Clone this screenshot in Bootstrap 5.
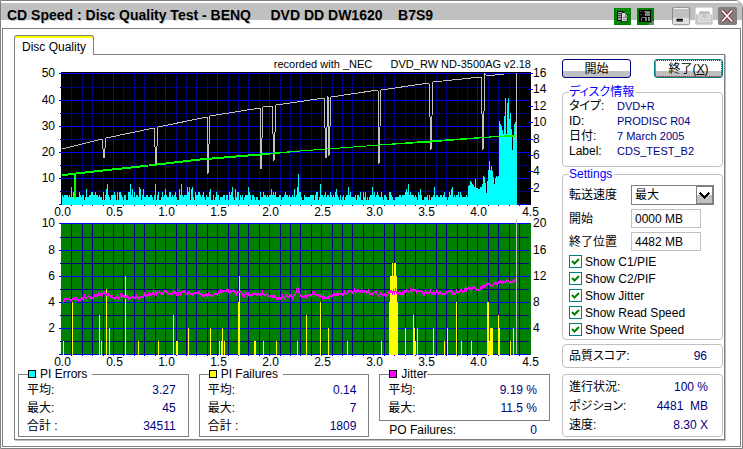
<!DOCTYPE html>
<html lang="ja">
<head>
<meta charset="utf-8">
<meta name="viewport" content="width=device-width, initial-scale=1">
<title>CD Speed : Disc Quality Test</title>
<link href="https://cdn.jsdelivr.net/npm/bootstrap@5.3.0/dist/css/bootstrap.min.css" rel="stylesheet">
<style>
  body { font-family: "Liberation Sans", "Noto Sans CJK JP", sans-serif; font-size: 12px; line-height: 16px; font-feature-settings: "palt"; color: #000; background: #fff; }
  .app-window { border: 1px solid #808080; border-top-right-radius: 8px; min-height: 100vh; }
  .title-bar { height: 27px; padding: 1px 4px 0 6px; background: linear-gradient(#fff 2px, #c0c0c0 2px, #c0c0c0 19px, #fff 19px); border-top-right-radius: 7px; }
  .title-text { font: bold 14px/26px "Liberation Sans", sans-serif; white-space: pre; text-shadow: 1px 1px 0 #c0c0c0; }
  .tool-btn { width: 19px; height: 19px; }
  .win-btn { width: 21px; height: 21px; }
  .win-btn + .win-btn { margin-left: 2px; }
  .frame { margin: 0 1px 1px; border: 1px solid #808080; padding: 6px 15px 5px 11px; }
  .tab-btn { height: 20px; margin-bottom: -1px; padding: 2px 7px 0; border: 1px solid #808080; border-bottom: 0; border-radius: 3px 3px 0 0; background: #fff; box-shadow: inset 0 2px 0 #ff0; position: relative; }
  .panel { border: 1px solid #808080; box-shadow: 1px 1px 0 #c0c0c0; }
  .plot { display: block; width: 100%; height: auto; overflow: visible; }
  .plot text { font-size: 12px; }
  .plot .caption { font-size: 11px; white-space: pre; }
  .stats { padding: 0 6px 0 3px; gap: 10px; grid-template-columns: repeat(3, minmax(0, 1fr)); }
  .stat-box { border: 1px solid #808080; height: 70px; padding: 0 12px 0 8px; }
  .stat-box.short { height: 54px; }
  .stat-box legend { float: none; width: auto; font-size: 12px; line-height: 14px; margin: 0 0 0 1px; padding-right: 5px; }
  .swatch { display: inline-block; width: 8px; height: 8px; border: 1px solid #000; margin-right: 4px; }
  .c-cyan { background: #0ff; } .c-yellow { background: #ff0; } .c-magenta { background: #f0f; }
  .stat-row { line-height: 18px; }
  .po-row { padding: 0 13px 0 10px; }
  .val { color: #000080; }
  .side { width: 168px; padding: 4px 1px 0 6px; }
  .cmd { width: 69px; height: 19px; padding: 0; border: 1px solid #000080; border-radius: 3px; line-height: 16px; background: linear-gradient(#fff 11px, #c0c0c0 11px); }
  .cmd.focused { border-color: #008080; outline: 1px dotted #800000; outline-offset: -2px; }
  .group { border: 1px solid #c0c0c0; border-radius: 4px; padding: 0 6px; }
  .group legend { float: none; width: auto; font-size: 12px; line-height: 14px; margin: 0; padding: 0 2px 0 0; color: #00f; }
  .disc { height: 82px; margin-top: 7px; }
  .disc .key { width: 48px; }
  .disc .val { font-size: 11px; }
  .disc .line { line-height: 15px; }
  .settings { height: 173px; }
  .settings .key { width: 62px; }
  .spin { width: 70px; height: 19px; padding: 0 3px; border: 1px solid #c0c0c0; border-radius: 0; line-height: 17px; }
  .speed { width: 83px; height: 20px; padding: 0 3px; border: 1px solid #808080; border-radius: 0; appearance: none; background: #fff; line-height: 18px; }
  .pick svg { right: 1px; top: 1px; pointer-events: none; }
  .tick { appearance: none; width: 13px; height: 13px; margin: 0 3px 0 0; border: 1px solid #008080; background: #fff; }
  .tick:checked { background: no-repeat center/9px 9px url("data:image/svg+xml,%3Csvg xmlns='http://www.w3.org/2000/svg' viewBox='0 0 9 9'%3E%3Cpath d='M1 4l2.5 2.5L8 2' fill='none' stroke='green' stroke-width='2'/%3E%3C/svg%3E"); }
  .checks { padding-top: 2px; }
  .check-row { height: 17px; }
  .score { margin-top: 4px; height: 24px; line-height: 22px; padding-right: 15px; }
  .progress-box { margin-top: 6px; height: 63px; line-height: 19px; padding: 3px 14px 0 6px; }
</style>
<script src="https://cdn.jsdelivr.net/npm/bootstrap@5.3.0/dist/js/bootstrap.bundle.min.js"></script>
</head>
<body>
<div class="app-window d-flex flex-column">
  <header class="title-bar d-flex align-items-center">
    <span class="title-text flex-grow-1">CD Speed : Disc Quality Test - BENQ     DVD DD DW1620    B7S9</span>
    <button class="tool-btn btn p-0 d-flex me-1" aria-label="Copy">
      <svg width="19" height="19" viewBox="0 0 19 19" shape-rendering="crispEdges"><rect width="19" height="19" rx="2" fill="#008000"/><path d="M2 1.500h15M2 3.500h2M15 4.500h3M15 15.500h3M1 16.500h6M1 14.500h2" stroke="#00c040" stroke-dasharray="1 1"/><path d="M3.500 3.500h6v10h-6z" fill="#a0a0a0" stroke="#000"/><path d="M5 6.500h3M5 8.500h3M5 10.500h3" stroke="#404040"/><path d="M8.500 5.500h4l3 3v7h-7z" fill="#d8d8d8" stroke="#202020"/><path d="M12.500 5v4h3M10 10.500h4M10 12.500h4" fill="none" stroke="#808080"/></svg>
    </button>
    <button class="tool-btn btn p-0 d-flex" aria-label="Save">
      <svg width="19" height="19" viewBox="0 0 19 19" shape-rendering="crispEdges"><rect width="19" height="19" rx="2" fill="#008000"/><path d="M13 18h5v-4" fill="none" stroke="#808080" stroke-width="2"/><rect x="2" y="2" width="14" height="14" fill="#000"/><path d="M8 3h6v6H9V5H8zM4 11h2v4H4zM6 10h5v1H6zM9 11h2v4H9zM12 10h2v5h-2z" fill="#808080"/><path d="M3 3.500h4M4 5.500h3M3 7.500h5" stroke="#505050" stroke-dasharray="1 1"/></svg>
    </button>
    <button class="win-btn btn p-0 d-flex ms-3" aria-label="Minimize">
      <svg width="21" height="21" viewBox="0 0 21 21"><rect x=".5" y=".5" width="19" height="19" rx="2" fill="#c0c0c0" stroke="#808080"/><path d="M2 1.500h16" stroke="#fff"/><path d="M1 12h18v7H1z" fill="#e0e0e0"/><path d="M5 13h7v3H5z"/><path d="M6 15.500h6" stroke="#808080"/></svg>
    </button>
    <button class="win-btn btn p-0 d-flex" aria-label="Maximize">
      <svg width="21" height="21" viewBox="0 0 21 21"><rect x=".5" y=".5" width="19" height="19" rx="2" fill="#c8c8c8" stroke="#d8d8d8"/><path d="M1 1h18v7H1z" fill="#fff"/><path d="M5.500 5.500h10v9h-10z" fill="#c8c8c8" stroke="#fff" stroke-width="3"/><path d="M5.500 5.500h10v9h-10zM5 6.500h11" fill="none" stroke="#a0a0a0"/></svg>
    </button>
    <button class="win-btn btn p-0 d-flex" aria-label="Close">
      <svg width="21" height="21" viewBox="0 0 21 21"><rect width="21" height="20" rx="2" fill="#808080"/><path d="M4.500 4l11 12M15.500 4l-11 12" stroke="#800000" stroke-width="3.500"/><path d="M4.500 4l11 12M15.500 4l-11 12" stroke="#fff" stroke-width="2"/></svg>
    </button>
  </header>

  <main class="frame flex-grow-1">
    <div class="d-flex" role="tablist"><button class="tab-btn" role="tab" aria-selected="true">Disc Quality</button></div>
    <div class="panel d-flex">
      <section class="flex-grow-1">
        <svg class="plot" id="pie" viewBox="15 55 541 163" role="img" aria-label="PI Errors"></svg>
        <svg class="plot" id="pif" viewBox="15 218 541 149" role="img" aria-label="PI Failures"></svg>
        <div class="stats d-grid">
          <fieldset class="stat-box">
            <legend><span class="swatch c-cyan"></span>PI Errors</legend>
            <div class="stat-row d-flex justify-content-between"><span>平均:</span><span class="val">3.27</span></div>
            <div class="stat-row d-flex justify-content-between"><span>最大:</span><span class="val">45</span></div>
            <div class="stat-row d-flex justify-content-between"><span>合計 :</span><span class="val">34511</span></div>
          </fieldset>
          <fieldset class="stat-box">
            <legend><span class="swatch c-yellow"></span>PI Failures</legend>
            <div class="stat-row d-flex justify-content-between"><span>平均:</span><span class="val">0.14</span></div>
            <div class="stat-row d-flex justify-content-between"><span>最大:</span><span class="val">7</span></div>
            <div class="stat-row d-flex justify-content-between"><span>合計 :</span><span class="val">1809</span></div>
          </fieldset>
          <div>
            <fieldset class="stat-box short">
              <legend class="pe-0"><span class="swatch c-magenta"></span>Jitter</legend>
              <div class="stat-row d-flex justify-content-between"><span>平均:</span><span class="val">9.19 %</span></div>
              <div class="stat-row d-flex justify-content-between"><span>最大:</span><span class="val">11.5 %</span></div>
            </fieldset>
            <div class="stat-row po-row d-flex justify-content-between"><span>PO Failures:</span><span class="val">0</span></div>
          </div>
        </div>
      </section>

      <aside class="side flex-shrink-0">
        <div class="d-flex justify-content-between">
          <button class="cmd">開始</button>
          <button class="cmd focused">終了(<u>X</u>)</button>
        </div>
        <fieldset class="group disc">
          <legend>ディスク情報</legend>
          <div class="line d-flex"><span class="key">タイプ:</span><span class="val">DVD+R</span></div>
          <div class="line d-flex"><span class="key">ID:</span><span class="val">PRODISC R04</span></div>
          <div class="line d-flex"><span class="key">日付:</span><span class="val">7 March 2005</span></div>
          <div class="line d-flex"><span class="key">Label:</span><span class="val">CDS_TEST_B2</span></div>
        </fieldset>
        <fieldset class="group settings">
          <legend>Settings</legend>
          <div class="d-flex align-items-center pt-1">
            <label class="key" for="speed">転送速度</label>
            <span class="pick position-relative d-flex">
              <select class="speed" id="speed"><option>最大</option></select>
              <svg class="position-absolute" width="17" height="18" viewBox="0 0 17 18" shape-rendering="crispEdges"><rect x=".5" y=".5" width="16" height="17" fill="#fff" stroke="#808080"/><path d="M1 9h15v8H1z" fill="#c0c0c0"/><path d="M4 7l4.500 4.500L13 7" fill="none" stroke="#000" stroke-width="2"/></svg>
            </span>
          </div>
          <div class="d-flex align-items-center pt-1"><label class="key" for="start">開始</label><input class="spin" id="start" value="0000 MB"></div>
          <div class="d-flex align-items-center pt-1"><label class="key" for="end">終了位置</label><input class="spin" id="end" value="4482 MB"></div>
          <div class="checks">
            <label class="check-row d-flex align-items-center"><input class="tick" type="checkbox" checked>Show C1/PIE</label>
            <label class="check-row d-flex align-items-center"><input class="tick" type="checkbox" checked>Show C2/PIF</label>
            <label class="check-row d-flex align-items-center"><input class="tick" type="checkbox" checked>Show Jitter</label>
            <label class="check-row d-flex align-items-center"><input class="tick" type="checkbox" checked>Show Read Speed</label>
            <label class="check-row d-flex align-items-center"><input class="tick" type="checkbox" checked>Show Write Speed</label>
          </div>
        </fieldset>
        <div class="group score d-flex justify-content-between"><span>品質スコア:</span><span class="val">96</span></div>
        <div class="group progress-box">
          <div class="d-flex justify-content-between"><span>進行状況:</span><span class="val">100 %</span></div>
          <div class="d-flex justify-content-between"><span>ポジション:</span><span class="val">4481&nbsp; MB</span></div>
          <div class="d-flex justify-content-between"><span>速度:</span><span class="val">8.30 X</span></div>
        </div>
      </aside>
    </div>
  </main>
</div>
<script>
  // Small repeatable generator, so the noise looks the same on every load
  let seed = 7;
  const rnd = () => (seed = (seed * 16807) % 2147483647) / 2147483647;
  const gx = g => Math.round(61 + g * 104.1) + .5;
  const path = (d, stroke, w = 1) => `<path d="${d}" fill="none" stroke="${stroke}" stroke-width="${w}" shape-rendering="crispEdges"/>`;
  const label = (x, y, t, a = 'start') => `<text x="${x}" y="${y}" text-anchor="${a}">${t}</text>`;
  const line = pts => 'M' + pts.map(p => p.join(' ')).join('L');
  const lerp = (pts, x) => {
    for (let i = 1; i < pts.length; i++) if (x <= pts[i][0]) {
      const [a, b] = [pts[i - 1], pts[i]];
      return a[1] + (b[1] - a[1]) * (x - a[0]) / (b[0] - a[0]);
    }
    return pts[pts.length - 1][1];
  };

  function grid(top, majors, minors, fill) {
    const bottom = majors[majors.length - 1];
    let minor = '', major = '', s = `<rect x="61" y="${top}" width="470" height="${bottom + 1 - top}" fill="${fill}"/>`;
    minors.forEach(y => minor += `M60 ${y + .5}H529`);
    for (let i = 1; i < 45; i++) if (i % 5) minor += `M${gx(i / 10)} ${top + 1}V${bottom + 2}`;
    majors.forEach(y => major += `M59 ${y + .5}H530`);
    for (let i = 1; i < 9; i++) major += `M${gx(i / 2)} ${top + 1}V${bottom + 2}`;
    s += path(minor, '#000080') + path(major, '#0000ff');
    for (let i = 0; i < 10; i++) s += label(gx(i / 2) + 1, bottom + 12, (i / 2).toFixed(1), 'middle');
    return s;
  }

  // Upper chart: PI errors with read and write speed
  const top1 = [73, 100, 126, 152, 178, 204];
  let s = grid(72, top1, [87, 113, 139, 165, 191], '#000');
  [50, 40, 30, 20, 10].forEach((v, i) => s += label(55, top1[i] + 4, v, 'end'));
  let ticks = '';
  [16, 14, 12, 10, 8, 6, 4, 2].forEach((v, i) => {
    const y = Math.round(73 + i * 16.4);
    ticks += `M527 ${y + .5}h6`;
    s += label(533, y + 4, v);
  });
  s += path(ticks, '#0000ff');
  s += `<text class="caption" x="531" y="68" text-anchor="end" xml:space="preserve">recorded with _NEC      DVD_RW ND-3500AG v2.18</text>`;
  const tail = [[467, 6], [470, 11], [473, 8], [475, 10], [478, 7], [482, 10], [484, 12], [486, 7], [489, 17], [491, 15], [494, 11], [498, 12], [498.5, 12], [499, 32], [501, 30], [503, 27], [505, 41], [506, 27], [507.5, 45], [509, 33], [510, 35], [511, 29], [512, 21], [514, 31], [516, 32]];
  let bars = '';
  for (let x = 62; x < 517; x++) {
    let v = 3 + Math.floor(rnd() * 2.4);
    const r = rnd();
    if (r > .88) v += 1 + Math.floor(rnd() * 3);
    if (r < .15) v = 2;
    if (x > 296 && x < 300) v = [7, 12, 5][x - 297];
    if (x > 467) v = lerp(tail, x) - (x < 499 ? rnd() * 3 : 0);
    bars += `M${x + .5} 205v${-Math.round(v * 2.62)}`;
  }
  s += path(bars, '#00ffff');
  s += path('M516.500 73V141', '#c0c0c0');
  s += path(line([[62, 149], [102, 139], [104, 158], [106, 138], [154, 128], [156, 166], [158, 127], [207, 117], [208, 174], [210, 116], [260, 108], [261, 169], [263, 107], [272, 106], [274, 161], [276, 105], [290, 103], [324, 98], [326, 158], [328, 96], [329, 156], [331, 97], [378, 90], [379, 164], [381, 90], [429, 83], [431, 150], [433, 82], [481, 77], [483, 150], [485, 74], [487, 76], [504, 74]]), '#c0c0c0');
  s += path(line([[62, 175], [74, 173], [75, 199], [76, 173], [140, 166], [200, 159], [260, 154], [300, 151], [380, 145], [430, 141], [504, 136], [515, 135]]), '#00ff00');
  s += path(line([[62, 176], [74, 174]]) + line([[76, 174], [140, 167], [200, 160], [260, 155], [300, 151], [380, 145], [430, 142], [504, 136], [515, 136]]), '#00ff00');
  document.getElementById('pie').innerHTML = s;

  // Lower chart: PI failures and jitter
  const top2 = [223, 250, 276, 302, 328, 354];
  s = grid(223, top2, [237, 263, 289, 315, 341], '#008000');
  [10, 8, 6, 4, 2].forEach((v, i) => s += label(55, top2[i] + 4, v, 'end') + label(533, top2[i] + 4, 20 - 4 * i));
  const fails = [[63, 1], [72, 4], [99, 3], [101, 1], [106, 5], [109, 2], [125, 6], [138, 1], [158, 1], [173, 3], [176, 1], [177, 1], [188, 2], [210, 2], [219, 1], [221, 1], [222, 2], [224, 1], [238, 4], [239, 6], [254, 1], [255, 1], [263, 1], [276, 1], [297, 1], [306, 3], [320, 4], [328, 2], [347, 1], [381, 1], [389, 4], [390, 6], [391, 6], [392, 7], [393, 6], [394, 7], [395, 7], [396, 6], [397, 4], [405, 2], [413, 3], [414, 2], [415, 1], [417, 2], [433, 2], [444, 1], [447, 2], [456, 4], [461, 1], [471, 1], [487, 4], [488, 4], [489, 1], [490, 2], [491, 2], [492, 2], [498, 3], [499, 2], [510, 1], [513, 2]];
  s += path(fails.map(([x, v]) => `M${x + .5} 355V${Math.round(354.5 - v * 13.1)}`).join(''), '#ffff00');
  const jit = [[62, 301], [65, 297], [73, 299], [93, 296], [103, 292], [113, 296], [137, 296], [160, 292], [180, 291], [197, 293], [213, 295], [222, 290], [230, 290], [243, 293], [263, 293], [280, 297], [294, 295], [297, 287], [300, 296], [310, 293], [325, 296], [347, 291], [367, 291], [385, 294], [393, 290], [400, 293], [412, 289], [423, 292], [457, 291], [467, 287], [480, 289], [483, 285], [497, 283], [503, 281], [515, 280]];
  let j = [];
  for (let x = 62; x < 516; x++) j.push([x + .5, Math.round(lerp(jit, x) + (rnd() - .5) * 4) + .5]);
  s += path(line(j), '#ff00ff') + path(line(j.map(([x, y]) => [x, y + 1])), '#ff00ff');
  s += path('M516.500 219V354', '#c0c0c0');
  document.getElementById('pif').innerHTML = s;
</script>
</body>
</html>
